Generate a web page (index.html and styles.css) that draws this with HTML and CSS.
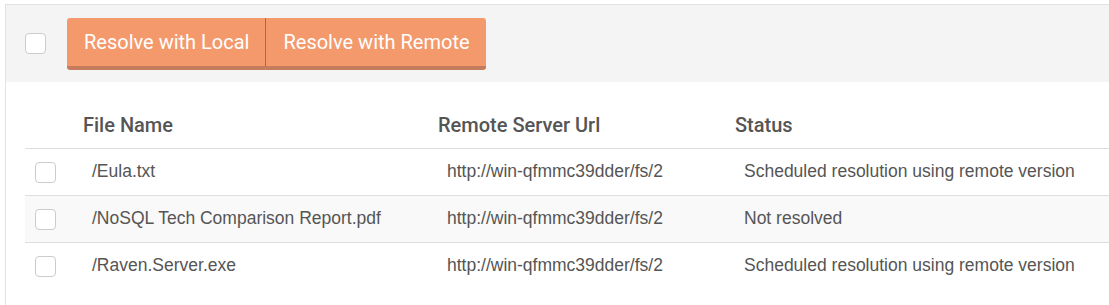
FILE: index.html
```html
<!DOCTYPE html>
<html lang="en">
<head>
	<meta charset="UTF-8">
	<title>Conflicts</title>
	<link rel="stylesheet" href="styles.css">
</head>
<body>
	<div class="panel">
		<div class="panel-toolbar">
			<span class="check"></span>
			<div class="btn-group">
				<button class="btn">Resolve with Local</button>
				<button class="btn">Resolve with Remote</button>
			</div>
		</div>
		<table class="conflicts">
			<thead>
				<tr>
					<th class="col-check"></th>
					<th class="col-name">File Name</th>
					<th class="col-url">Remote Server Url</th>
					<th>Status</th>
				</tr>
			</thead>
			<tbody>
				<tr>
					<td class="col-check"><span class="check"></span></td>
					<td>/Eula.txt</td>
					<td>http://win-qfmmc39dder/fs/2</td>
					<td>Scheduled resolution using remote version</td>
				</tr>
				<tr class="odd">
					<td class="col-check"><span class="check"></span></td>
					<td>/NoSQL Tech Comparison Report.pdf</td>
					<td>http://win-qfmmc39dder/fs/2</td>
					<td>Not resolved</td>
				</tr>
				<tr>
					<td class="col-check"><span class="check"></span></td>
					<td>/Raven.Server.exe</td>
					<td>http://win-qfmmc39dder/fs/2</td>
					<td>Scheduled resolution using remote version</td>
				</tr>
			</tbody>
		</table>
	</div>
</body>
</html>
```

FILE: styles.css
```css
html, body {
	margin: 0;
	padding: 0;
	background: #fff;
	overflow: hidden;
}
.panel {
	margin: 4px -20px 0 5px;
	border-top: 1px solid #e2e2e2;
	border-left: 1px solid #e2e2e2;
	height: 300px;
}
.panel-toolbar {
	height: 77px;
	background-color: #f4f4f4;
	display: flex;
	align-items: center;
	padding-left: 19px;
}
.check {
	display: block;
	width: 19px;
	height: 19px;
	border: 1px solid #ccc;
	border-radius: 4px;
	background: #fff;
}
.btn-group {
	display: flex;
	margin-left: 21px;
	margin-top: 1px;
}
.btn {
	height: 52px;
	border: 0;
	border-bottom: 4px solid #c47d5c;
	background-color: #f4996c;
	color: #fff;
	font-family: Roboto, "Liberation Sans", sans-serif;
	font-size: 20px;
	padding: 0 16px 0 17px;
	margin: 0;
	cursor: pointer;
}
.btn:first-child {
	border-radius: 3px 0 0 3px;
	border-right: 1px solid #b96440;
}
.btn:last-child {
	border-radius: 0 3px 3px 0;
}
.conflicts {
	margin-left: 19px;
	width: 1120px;
	border-collapse: collapse;
	color: #555;
}
.conflicts th {
	font-family: Roboto, "Liberation Sans", sans-serif;
	font-size: 20px;
	font-weight: 500;
	line-height: 24px;
	text-align: left;
	padding: 31px 8px 11px;
	border-bottom: 1px solid #ddd;
}
.conflicts td {
	font-family: "Liberation Sans", Arial, sans-serif;
	font-size: 17.5px;
	height: 44px;
	padding: 0 8px 2px 17px;
	border-bottom: 1px solid #ddd;
	vertical-align: middle;
}
.conflicts tbody tr:last-child td {
	border-bottom: 0;
}
.conflicts tr.odd td {
	background-color: #f9f9f9;
}
.conflicts .col-check {
	width: 50px;
	padding: 0 0 0 10px;
	box-sizing: border-box;
}
.conflicts .col-name {
	width: 355px;
	box-sizing: border-box;
}
.conflicts .col-url {
	width: 297px;
	box-sizing: border-box;
}
```
